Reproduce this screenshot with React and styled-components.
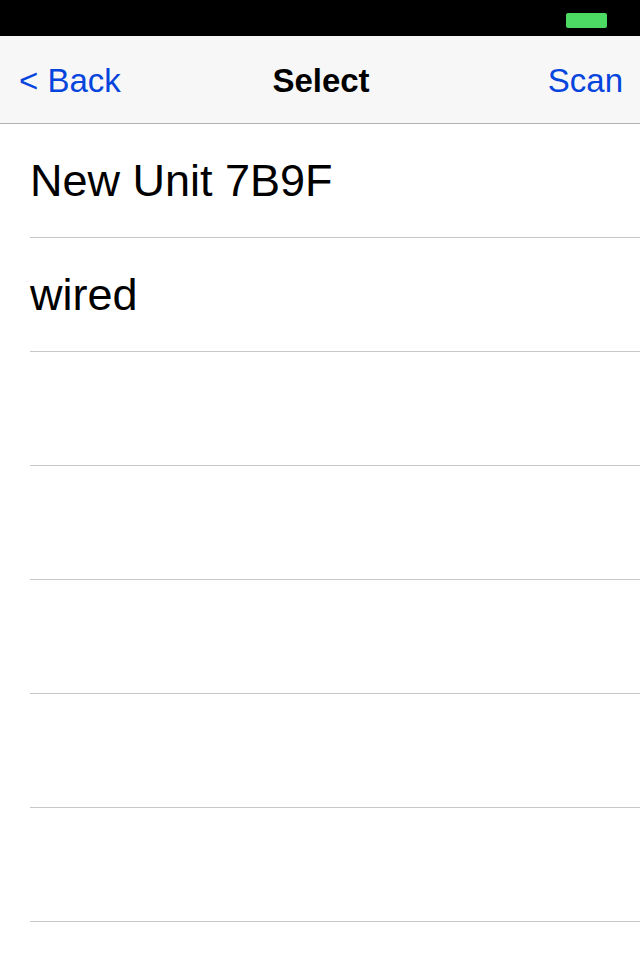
import React from "react";
import styled, { createGlobalStyle } from "styled-components";

const GlobalStyle = createGlobalStyle`
  html, body {
    margin: 0;
    padding: 0;
    background: #ffffff;
    font-family: "Liberation Sans", Arial, sans-serif;
  }
`;

const Screen = styled.div`
  width: 640px;
  height: 960px;
  overflow: hidden;
  background: #ffffff;
`;

const StatusBar = styled.div`
  height: 36px;
  background: #000000;
  display: flex;
  align-items: center;
  justify-content: flex-end;
  padding-right: 33px;
`;

const Battery = styled.div`
  width: 41px;
  height: 15px;
  margin-top: 5px;
  border-radius: 2px;
  background: #4cd964;
`;

const NavBar = styled.div`
  height: 87px;
  background: #f7f7f7;
  border-bottom: 1px solid #b2b2b2;
  display: grid;
  grid-template-columns: 1fr auto 1fr;
  align-items: center;
  padding: 0 17px 0 19px;
  font-size: 33px;
`;

const NavButton = styled.div`
  color: #0544dd;
  justify-self: ${({ $end }) => ($end ? "end" : "start")};
  margin-top: 2px;
`;

const Title = styled.div`
  font-weight: 700;
  color: #000000;
  margin-top: 2px;
`;

const List = styled.div`
  display: flex;
  flex-direction: column;
`;

const Row = styled.div`
  height: 113px;
  display: flex;
  flex-direction: column;
`;

const Label = styled.div`
  flex: 1;
  display: flex;
  align-items: center;
  padding-left: 30px;
  font-size: 45px;
  color: #000000;
`;

const Separator = styled.div`
  height: 1px;
  margin-left: 30px;
  background: #c8c7cc;
`;

const items = ["New Unit 7B9F", "wired", "", "", "", "", "", ""];

export default function App() {
  return (
    <Screen>
      <GlobalStyle />
      <StatusBar>
        <Battery />
      </StatusBar>
      <NavBar>
        <NavButton>&lt; Back</NavButton>
        <Title>Select</Title>
        <NavButton $end>Scan</NavButton>
      </NavBar>
      <List>
        {items.map((name, i) => (
          <React.Fragment key={i}>
            <Row>
              <Label>{name}</Label>
            </Row>
            <Separator />
          </React.Fragment>
        ))}
      </List>
    </Screen>
  );
}
